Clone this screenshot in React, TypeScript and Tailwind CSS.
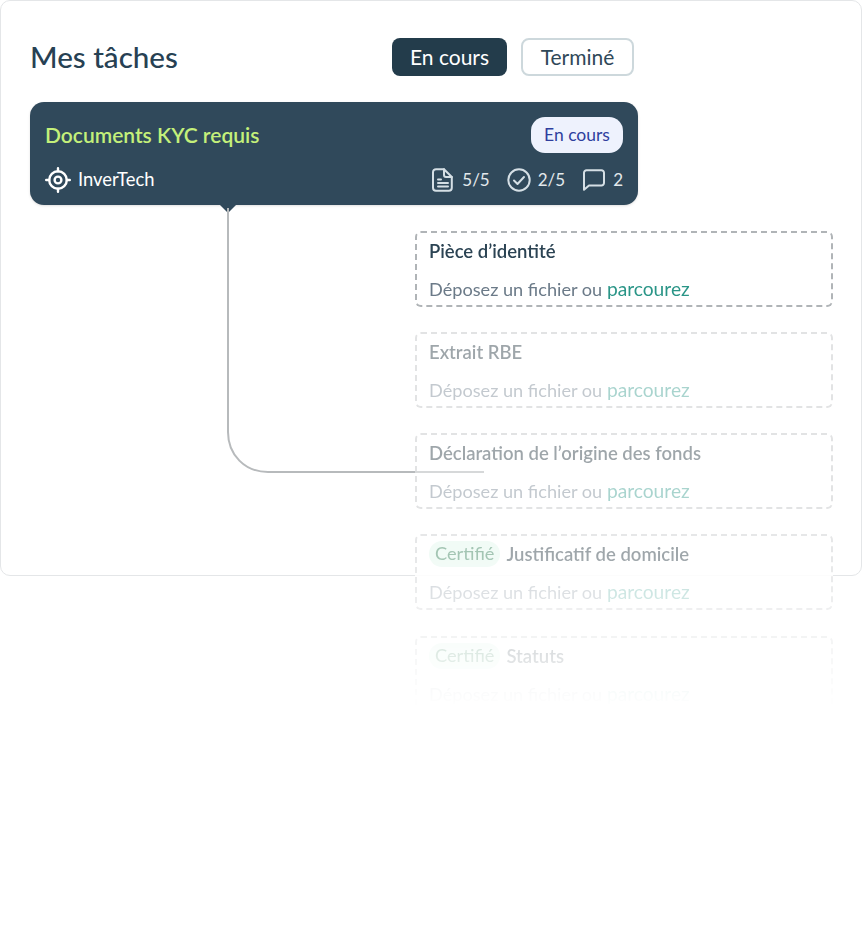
const docs = [
  { name: "Pièce d’identité", certified: false, fade: "opacity-100", title: "text-[#2b4353] opacity-100", border: "border-[#b0b4b7]" },
  { name: "Extrait RBE", certified: false, fade: "opacity-40", title: "text-[#2b3b45] opacity-45", border: "border-[#e2e3e4]" },
  { name: "Déclaration de l’origine des fonds", certified: false, fade: "opacity-40", title: "text-[#2b3b45] opacity-45", border: "border-[#e2e3e4]" },
  { name: "Justificatif de domicile", certified: true, fade: "opacity-30", title: "text-[#2b3b45] opacity-45", border: "border-[#e6e7e8]" },
  { name: "Statuts", certified: true, fade: "opacity-30", title: "text-[#2b3b45] opacity-45", border: "border-[#e6e7e8]" },
];

function TargetIcon() {
  return (
    <svg width="26" height="26" viewBox="0 0 26 26" fill="none" stroke="white" strokeWidth="2.4">
      <circle cx="13" cy="13" r="8.8" />
      <circle cx="13" cy="13" r="3.4" />
      <path d="M13 1.2v3M13 21.8v3M1.2 13h3M21.8 13h3" strokeLinecap="round" />
    </svg>
  );
}

function DocIcon() {
  return (
    <svg width="22" height="24" viewBox="0 0 22 24" fill="none" stroke="#d5dfe5" strokeWidth="2" strokeLinecap="round" strokeLinejoin="round">
      <path d="M4 1.2h8l7.8 7.8v10.8a3 3 0 0 1-3 3H4a3 3 0 0 1-3-3V4.2a3 3 0 0 1 3-3Z" />
      <path d="M12 1.2V7a2 2 0 0 0 2 2h5.8" />
      <path d="M6 11.5h3M6 15h10M6 18.5h10" />
    </svg>
  );
}

function CheckIcon() {
  return (
    <svg width="24" height="24" viewBox="0 0 24 24" fill="none" stroke="#d5dfe5" strokeWidth="2" strokeLinecap="round" strokeLinejoin="round">
      <circle cx="12" cy="12" r="10.7" />
      <path d="M7 12.5l3.5 3.5 6.5-7" />
    </svg>
  );
}

function CommentIcon() {
  return (
    <svg width="22" height="22" viewBox="0 0 22 22" fill="none" stroke="#d5dfe5" strokeWidth="2" strokeLinecap="round" strokeLinejoin="round">
      <path d="M3.5 1.2h15A2.5 2.5 0 0 1 21 3.7v10.3a2.5 2.5 0 0 1-2.5 2.5H6l-5 4.3V3.7a2.5 2.5 0 0 1 2.5-2.5Z" />
    </svg>
  );
}

function Connector() {
  return (
    <svg className="absolute left-[225px] top-[203px]" width="262" height="272" viewBox="0 0 262 272" fill="none">
      <path d="M2 4V228C2 251 19 268 42 268H189" stroke="#b7babc" strokeWidth="2" />
      <path d="M189 268H258" stroke="#d6d8d9" strokeWidth="2" />
    </svg>
  );
}

function DropZone({ name, certified, fade, title, border }: (typeof docs)[number]) {
  return (
    <div className="bg-white rounded-md shrink-0 last:mt-px">
      <div className={`h-[76px] rounded-md border-2 border-dashed px-3 flex flex-col ${border}`}>
        <div className="flex items-center gap-[6px] mt-[5px] h-[26px]">
          {certified && (
            <span className="h-[26px] px-[6px] rounded-full bg-[#f1fbf6] text-[#a3c5b3] text-[18.2px] flex items-center">
              Certifié
            </span>
          )}
          <span className={`text-[18.5px] font-semibold leading-[26px] ${title}`}>{name}</span>
        </div>
        <div className={`mt-[13px] text-[18.15px] leading-[24px] text-[#6b7a88] ${fade}`}>
          Déposez un fichier ou <span className="text-[19.2px] text-[#2a9587]">parcourez</span>
        </div>
      </div>
    </div>
  );
}

export default function App() {
  return (
    <div className="w-[862px] h-[931px] bg-white font-['Lato',sans-serif]">
      <div className="relative h-[576px] rounded-[10px] border border-[#e4e6e8] pl-[29px] pt-[37px]">
        <div className="flex items-center h-[38px] w-[604px]">
          <h1 className="text-[29.6px] font-medium text-[#274153] leading-none">Mes tâches</h1>
          <div className="ml-auto flex gap-[14px] text-[21px]">
            <button className="w-[115px] h-[38px] rounded-lg bg-[#233c4b] text-white">En cours</button>
            <button className="w-[113px] h-[38px] rounded-lg border-2 border-[#cdd8dc] text-[#2f4858]">Terminé</button>
          </div>
        </div>

        <div className="relative mt-[26px] w-[608px] h-[103px] rounded-[14px] bg-[#30495b] px-[15px] pt-[15px] shadow-sm">
          <div className="flex items-center justify-between h-[36px]">
            <span className="text-[21px] font-semibold text-[#c4f07a]">Documents KYC requis</span>
            <span className="w-[92px] h-[36px] flex items-center justify-center rounded-[14px] bg-[#eef2fd] text-[#2f3f9e] text-[17.5px]">En cours</span>
          </div>
          <div className="mt-[14px] flex items-center justify-between h-[26px] text-white">
            <div className="flex items-center gap-[7px] text-[18.4px]">
              <TargetIcon />
              InverTech
            </div>
            <div className="flex items-center text-[17px] text-[#e2e8ec]">
              <DocIcon />
              <span className="ml-[8px]">5/5</span>
              <span className="ml-[17px]"><CheckIcon /></span>
              <span className="ml-[7px]">2/5</span>
              <span className="ml-[18px]"><CommentIcon /></span>
              <span className="ml-[8px]">2</span>
            </div>
          </div>
          <div className="absolute left-[190px] top-[103px] w-0 h-0 border-x-[8px] border-x-transparent border-t-[8px] border-t-[#30495b]" />
        </div>

        <div className="relative mt-[26px] ml-[385px] w-[418px] h-[477px] overflow-hidden flex flex-col gap-[25px] [mask-image:linear-gradient(to_bottom,black_68%,transparent_100%)]">
          {docs.map((d) => (
            <DropZone key={d.name} {...d} />
          ))}
        </div>
        <Connector />
      </div>
    </div>
  );
}
